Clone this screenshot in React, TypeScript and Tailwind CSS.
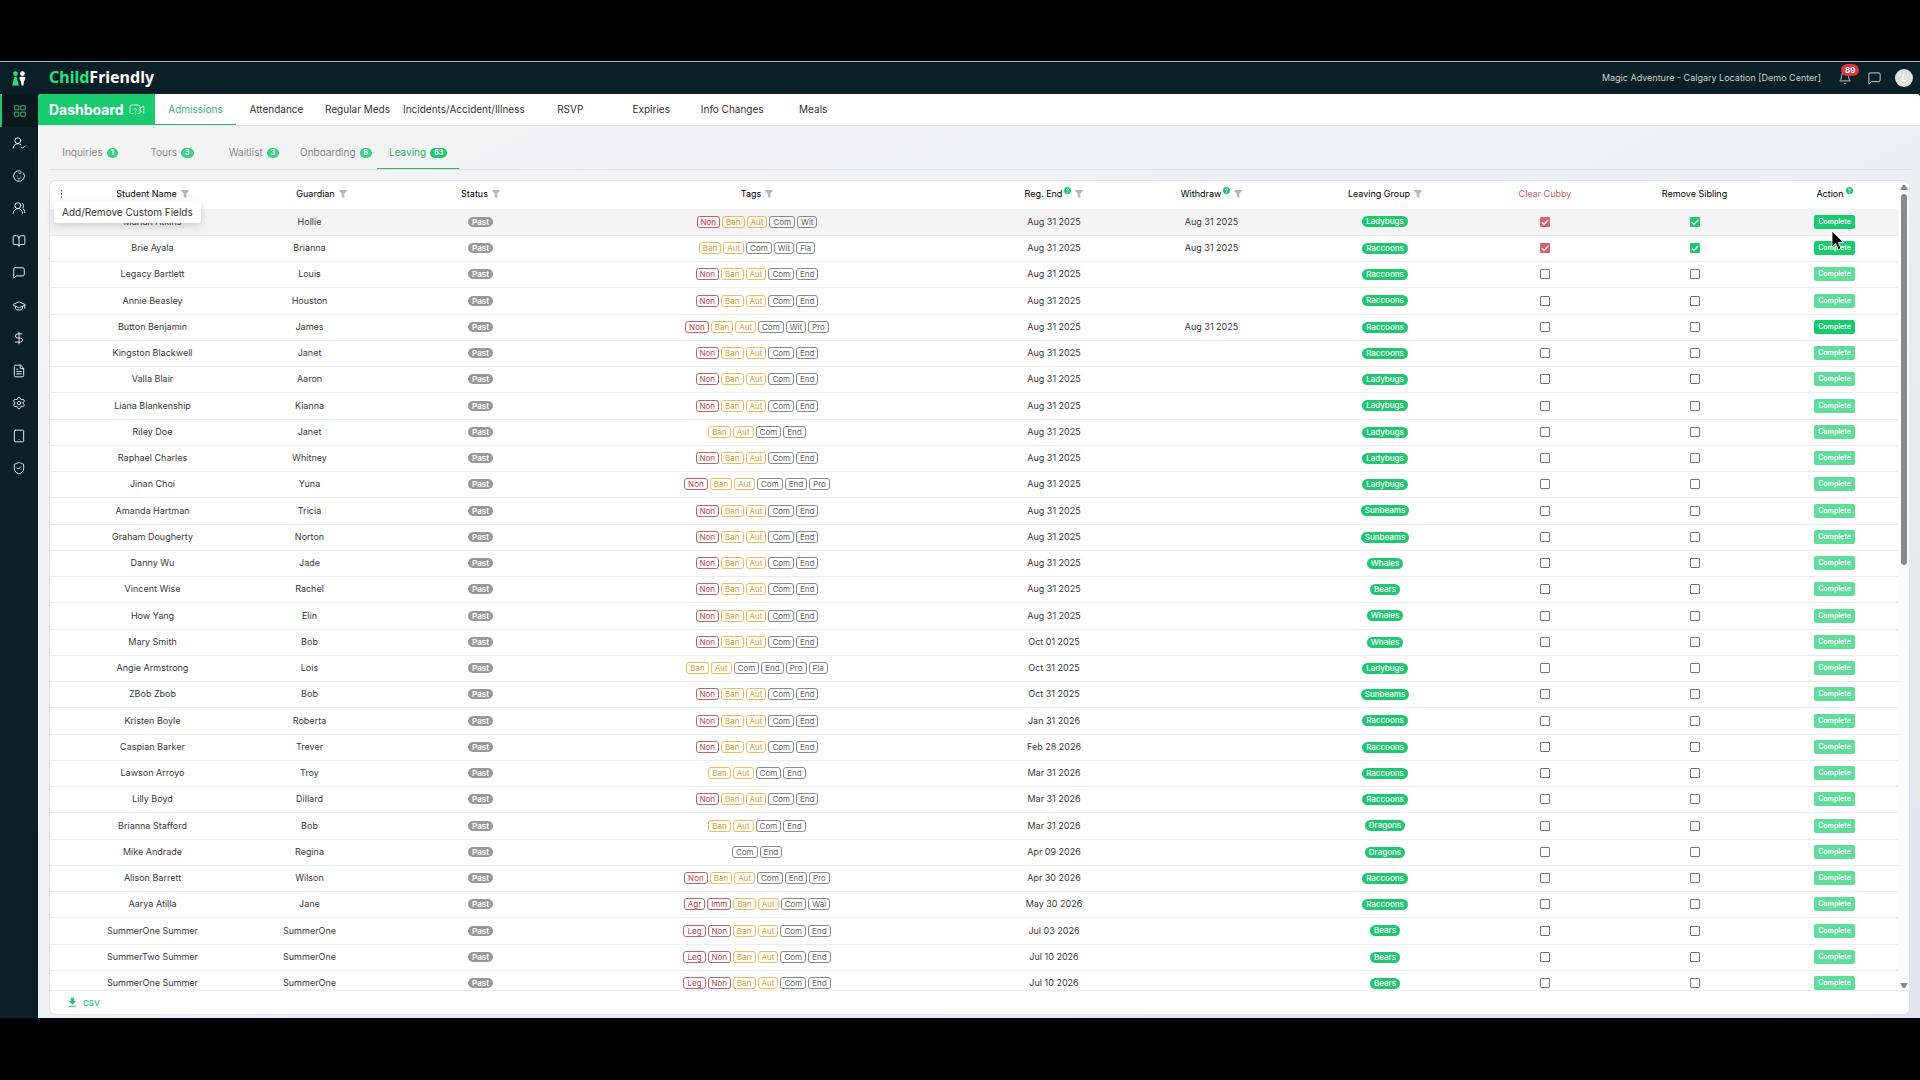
import { useState } from 'react';
import clsx from 'clsx';
import { FiBell, FiGrid, FiMessageSquare } from 'react-icons/fi';
import { MdDownload } from 'react-icons/md';
import {
  Baby,
  BookOpen,
  DollarSign,
  FileText,
  GraduationCap,
  Settings,
  ShieldCheck,
  Tablet,
  UserRoundCheck,
  UsersRound,
} from 'lucide-react';

type Row = {
  name: string;
  guardian: string;
  tags: string;
  regEnd: string;
  withdraw?: string;
  group: string;
  checked?: boolean;
};

const NBACE = 'Non Ban Aut Com End';
const AUG = 'Aug 31 2025';

const initialRows: Row[] = [
  { name: 'Marian Atkins', guardian: 'Hollie', tags: 'Non Ban Aut Com Wit', regEnd: AUG, withdraw: AUG, group: 'Ladybugs', checked: true },
  { name: 'Brie Ayala', guardian: 'Brianna', tags: 'Ban Aut Com Wit Fla', regEnd: AUG, withdraw: AUG, group: 'Raccoons', checked: true },
  { name: 'Legacy Bartlett', guardian: 'Louis', tags: NBACE, regEnd: AUG, group: 'Raccoons' },
  { name: 'Annie Beasley', guardian: 'Houston', tags: NBACE, regEnd: AUG, group: 'Raccoons' },
  { name: 'Button Benjamin', guardian: 'James', tags: 'Non Ban Aut Com Wit Pro', regEnd: AUG, withdraw: AUG, group: 'Raccoons' },
  { name: 'Kingston Blackwell', guardian: 'Janet', tags: NBACE, regEnd: AUG, group: 'Raccoons' },
  { name: 'Valla Blair', guardian: 'Aaron', tags: NBACE, regEnd: AUG, group: 'Ladybugs' },
  { name: 'Liana Blankenship', guardian: 'Kianna', tags: NBACE, regEnd: AUG, group: 'Ladybugs' },
  { name: 'Riley Doe', guardian: 'Janet', tags: 'Ban Aut Com End', regEnd: AUG, group: 'Ladybugs' },
  { name: 'Raphael Charles', guardian: 'Whitney', tags: NBACE, regEnd: AUG, group: 'Ladybugs' },
  { name: 'Jinan Choi', guardian: 'Yuna', tags: 'Non Ban Aut Com End Pro', regEnd: AUG, group: 'Ladybugs' },
  { name: 'Amanda Hartman', guardian: 'Tricia', tags: NBACE, regEnd: AUG, group: 'Sunbeams' },
  { name: 'Graham Dougherty', guardian: 'Norton', tags: NBACE, regEnd: AUG, group: 'Sunbeams' },
  { name: 'Danny Wu', guardian: 'Jade', tags: NBACE, regEnd: AUG, group: 'Whales' },
  { name: 'Vincent Wise', guardian: 'Rachel', tags: NBACE, regEnd: AUG, group: 'Bears' },
  { name: 'How Yang', guardian: 'Elin', tags: NBACE, regEnd: AUG, group: 'Whales' },
  { name: 'Mary Smith', guardian: 'Bob', tags: NBACE, regEnd: 'Oct 01 2025', group: 'Whales' },
  { name: 'Angie Armstrong', guardian: 'Lois', tags: 'Ban Aut Com End Pro Fla', regEnd: 'Oct 31 2025', group: 'Ladybugs' },
  { name: 'ZBob Zbob', guardian: 'Bob', tags: NBACE, regEnd: 'Oct 31 2025', group: 'Sunbeams' },
  { name: 'Kristen Boyle', guardian: 'Roberta', tags: NBACE, regEnd: 'Jan 31 2026', group: 'Raccoons' },
  { name: 'Caspian Barker', guardian: 'Trever', tags: NBACE, regEnd: 'Feb 28 2026', group: 'Raccoons' },
  { name: 'Lawson Arroyo', guardian: 'Troy', tags: 'Ban Aut Com End', regEnd: 'Mar 31 2026', group: 'Raccoons' },
  { name: 'Lilly Boyd', guardian: 'Dillard', tags: NBACE, regEnd: 'Mar 31 2026', group: 'Raccoons' },
  { name: 'Brianna Stafford', guardian: 'Bob', tags: 'Ban Aut Com End', regEnd: 'Mar 31 2026', group: 'Dragons' },
  { name: 'Mike Andrade', guardian: 'Regina', tags: 'Com End', regEnd: 'Apr 09 2026', group: 'Dragons' },
  { name: 'Alison Barrett', guardian: 'Wilson', tags: 'Non Ban Aut Com End Pro', regEnd: 'Apr 30 2026', group: 'Raccoons' },
  { name: 'Aarya Atilla', guardian: 'Jane', tags: 'Agr Imm Ban Aut Com Wai', regEnd: 'May 30 2026', group: 'Raccoons' },
  { name: 'SummerOne Summer', guardian: 'SummerOne', tags: 'Leg Non Ban Aut Com End', regEnd: 'Jul 03 2026', group: 'Bears' },
  { name: 'SummerTwo Summer', guardian: 'SummerOne', tags: 'Leg Non Ban Aut Com End', regEnd: 'Jul 10 2026', group: 'Bears' },
  { name: 'SummerOne Summer', guardian: 'SummerOne', tags: 'Leg Non Ban Aut Com End', regEnd: 'Jul 10 2026', group: 'Bears' },
];

const tagColors: Record<string, string> = {
  Non: 'border-[#c4626a] text-[#b9434d]',
  Agr: 'border-[#c4626a] text-[#b9434d]',
  Imm: 'border-[#c4626a] text-[#b9434d]',
  Leg: 'border-[#c4626a] text-[#b9434d]',
  Ban: 'border-[#e6c05c] text-[#d9a033]',
  Aut: 'border-[#e6c05c] text-[#d9a033]',
};

const sideItems = [
  { label: 'Dashboard', Icon: FiGrid },
  { label: 'Attendance', Icon: UserRoundCheck },
  { label: 'Children', Icon: Baby },
  { label: 'Families', Icon: UsersRound },
  { label: 'Programs', Icon: BookOpen },
  { label: 'Messages', Icon: FiMessageSquare },
  { label: 'Learning', Icon: GraduationCap },
  { label: 'Billing', Icon: DollarSign },
  { label: 'Reports', Icon: FileText },
  { label: 'Settings', Icon: Settings },
  { label: 'Devices', Icon: Tablet },
  { label: 'Security', Icon: ShieldCheck },
];

const mainTabs = ['Admissions', 'Attendance', 'Regular Meds', 'Incidents/Accident/Illness', 'RSVP', 'Expiries', 'Info Changes', 'Meals'];

const subTabs = [
  { label: 'Inquiries', count: 1 },
  { label: 'Tours', count: 3 },
  { label: 'Waitlist', count: 3 },
  { label: 'Onboarding', count: 8 },
  { label: 'Leaving', count: 63 },
];

const columns = [
  { label: 'Student Name', filter: true },
  { label: 'Guardian', filter: true, className: 'pl-6' },
  { label: 'Status', filter: true },
  { label: 'Tags', filter: true },
  { label: 'Reg. End', filter: true, help: true },
  { label: 'Withdraw', filter: true, help: true },
  { label: 'Leaving Group', filter: true },
  { label: 'Clear Cubby', className: 'text-[#cf5f6c]' },
  { label: 'Remove Sibling' },
  { label: 'Action', help: true, className: 'pr-[10px]' },
];

function LogoMark() {
  return (
    <svg viewBox="0 0 14 15" className="h-[15px] w-[14px]" aria-hidden="true">
      <circle cx="3.5" cy="2.6" r="2.4" fill="#22e37f" />
      <path d="M2.4 5.8h2.2L6.8 14.6H.2z" fill="#22e37f" />
      <circle cx="10.4" cy="2.6" r="2.4" fill="#fff" />
      <path d="M7.3 6.2Q10.4 4.8 13.5 6.2L12.6 9.8H12L11.4 14.6H9.6L8.8 9.8H8.2z" fill="#fff" />
    </svg>
  );
}

function VideoHelpIcon() {
  return (
    <svg viewBox="0 0 16 12" className="h-3 w-4" fill="none" stroke="#c5f5da" strokeWidth="1" aria-hidden="true">
      <path d="M4.5 9.5H2.3A1.3 1.3 0 0 1 1 8.2V2.3A1.3 1.3 0 0 1 2.3 1H9.7A1.3 1.3 0 0 1 11 2.3V8.2A1.3 1.3 0 0 1 9.7 9.5H8.5" />
      <path d="M11 4.3 14.8 2V9L11 6.7" />
      <path d="M5 5.8Q5 4.6 6.3 4.6T7.5 6Q7.4 6.900 6.300 7.500V8.500M6.300 9.600V10.800" />
    </svg>
  );
}

function FilterIcon() {
  return (
    <svg viewBox="0 0 8 8" className="h-2 w-2" fill="#b9b9b9" aria-hidden="true">
      <path d="M.2 0H7.8V1.2L5.4 3.6V8L2.700 7V3.600L.2 1.200z" />
    </svg>
  );
}

function HelpDot() {
  return (
    <svg viewBox="0 0 8 8" className="mb-2 h-[7px] w-[7px]" aria-hidden="true">
      <circle cx="4" cy="4" r="4" fill="#1fc870" />
      <path d="M2.8 3.2Q2.9 2 4 2T5.2 3.2Q5.2 3.8 4 4.3V4.9M4 5.600V6.400" fill="none" stroke="#fff" strokeWidth=".9" />
    </svg>
  );
}

function CheckBox({ label, checked, color, onChange }: { label: string; checked: boolean; color: string; onChange: () => void }) {
  return (
    <label className="mx-auto grid h-[10px] w-[10px] place-items-center">
      <input
        type="checkbox"
        aria-label={label}
        checked={checked}
        onChange={onChange}
        className={clsx('[grid-area:1/1] h-[10px] w-[10px] appearance-none rounded-[1px] border', checked ? color : 'border-[#777] bg-white')}
      />
      {checked && (
        <svg viewBox="0 0 10 10" className="pointer-events-none [grid-area:1/1] h-[10px] w-[10px]" aria-hidden="true">
          <path d="M1.8 5.2 4 7.4 8.3 2.9" fill="none" stroke="#fff" strokeWidth="1.3" />
        </svg>
      )}
    </label>
  );
}

function Tag({ name }: { name: string }) {
  return (
    <span className={clsx('h-3 rounded-[3px] border px-[3px] text-[8px] leading-[10px]', tagColors[name] ?? 'border-[#8a8a8a] text-[#666]')}>
      {name}
    </span>
  );
}

export default function App() {
  const [activeTab, setActiveTab] = useState('Admissions');
  const [activeSub, setActiveSub] = useState('Leaving');
  const [cubby, setCubby] = useState(initialRows.map((r) => !!r.checked));
  const [sibling, setSibling] = useState(initialRows.map((r) => !!r.checked));

  const toggle = (list: boolean[], i: number) => list.map((v, n) => (n === i ? !v : v));

  return (
    <div className="flex h-screen flex-col overflow-hidden bg-black pt-[61px] pb-[62px] font-['Inter',sans-serif]">
      <div className="flex min-h-0 flex-1 flex-col border-t border-[#aeb4b6] bg-[#0b1f26]">
        <header className="flex h-8 shrink-0 items-center">
          <div className="flex w-[38px] justify-center">
            <LogoMark />
          </div>
          <div className="ml-[11px] flex-1 pb-[2px] font-['Noto_Sans',sans-serif] text-[16px] leading-5 font-bold text-white">
            <span className="text-[#22e37f]">Child</span>Friendly
          </div>
          <span className="text-[9px] text-[#c9d0d2]">Magic Adventure - Calgary Location [Demo Center]</span>
          <button aria-label="Notifications" className="relative ml-[17px] h-[14px] w-[14px] text-[#d5dadb]">
            <FiBell size={14} strokeWidth={1.5} />
            <span className="absolute -top-[7px] left-[3px] rounded-full bg-[#dc3545] px-1 text-[8px] leading-3 font-bold text-white">89</span>
          </button>
          <button aria-label="Chat" className="ml-[15px] text-[#d5dadb]">
            <FiMessageSquare size={15} strokeWidth={1.5} />
          </button>
          <button aria-label="Account" className="mr-[7px] ml-[13px] h-[18px] w-[18px] rounded-full bg-[#e2e2e4] text-[8px] font-bold text-white">
            L
          </button>
        </header>

        <div className="flex min-h-0 flex-1">
          <nav aria-label="Main" className="w-[38px] shrink-0">
            {sideItems.map(({ label, Icon }, i) => (
              <a
                key={label}
                href="#"
                aria-label={label}
                className={clsx(
                  'flex h-8 items-center justify-center odd:h-[33px]',
                  i === 0 ? 'border-l-2 border-[#1fc870] bg-[#0a171d] text-[#3fae74]' : 'text-[#e6eaeb]'
                )}
              >
                <Icon size={14} strokeWidth={1.7} />
              </a>
            ))}
          </nav>

          <main className="flex min-w-0 flex-1 flex-col overflow-hidden rounded-t-[4px] bg-linear-to-br from-[#f4f4f4] via-[#eeeff3] to-[#e1e4ed]">
            <div className="flex h-8 shrink-0 border-b border-[#e4e8e6] bg-white">
              <h1 className="flex w-[117px] items-center gap-[5px] bg-[#18cb6e] pl-[11px] text-[14px] font-bold text-white">
                Dashboard
                <VideoHelpIcon />
              </h1>
              {mainTabs.map((tab) => (
                <button
                  key={tab}
                  onClick={() => setActiveTab(tab)}
                  className={clsx(
                    'min-w-[81px] border-b px-[5px] text-[10px] whitespace-nowrap',
                    tab === activeTab ? 'border-[#2fb673] text-[#2fb673]' : 'border-transparent text-[#333]'
                  )}
                >
                  {tab}
                </button>
              ))}
            </div>

            <div className="mt-[11px] mr-[9px] ml-[11px] flex h-[33px] shrink-0 border-b border-[#dfe0e3]">
              {subTabs.map(({ label, count }) => (
                <button
                  key={label}
                  onClick={() => setActiveSub(label)}
                  className={clsx(
                    'flex min-w-[82px] items-center justify-center gap-1 border-b px-[5px] text-[10px]',
                    label === activeSub ? 'border-[#2fb673] text-[#2fb673]' : 'border-transparent text-[#8a8a8a]'
                  )}
                >
                  {label}
                  <span className={clsx('rounded-full px-1 text-[7px] leading-[10px] font-bold text-white', label === activeSub ? 'bg-[#1fc870]' : 'bg-[#3fd08a]')}>
                    {count}
                  </span>
                </button>
              ))}
            </div>

            <section className="relative mt-[10px] mr-[10px] mb-[3px] ml-[11px] flex min-h-0 flex-1 flex-col rounded-[7px] border border-[#e3e4e7] bg-white">
              <div className="flex min-h-0 flex-1">
                <div className="min-w-0 flex-1 overflow-hidden">
                  <table className="w-full table-fixed text-center text-[9px] leading-3 whitespace-nowrap text-[#3a3a3a]">
                    <colgroup>
                      <col className="w-[56px]" />
                      <col className="w-[93px]" />
                      <col className="w-[221px]" />
                      <col className="w-[121px]" />
                      <col />
                      <col className="w-[162px]" />
                      <col className="w-[153px]" />
                      <col className="w-[194px]" />
                      <col className="w-[126px]" />
                      <col className="w-[173px]" />
                      <col className="w-[117px]" />
                    </colgroup>
                    <thead>
                      <tr className="h-[28px] text-black">
                        <th className="pb-[2px] pl-[10px] text-left">
                          <button aria-label="Add/Remove Custom Fields" className="block">
                            <svg viewBox="0 0 3 8" className="h-2 w-[3px]" fill="#444" aria-hidden="true">
                              <path d="M1 0h1v1.500H1zM1 3h1v1.500H1zM1 6h1v1.500H1z" />
                            </svg>
                          </button>
                        </th>
                        {columns.map((col) => (
                          <th key={col.label} className={clsx('pb-[2px] font-normal', col.className)}>
                            <div className="flex items-center justify-center gap-1">
                              <span className="flex items-center gap-[2px]">
                                {col.label}
                                {col.help && <HelpDot />}
                              </span>
                              {col.filter && <FilterIcon />}
                            </div>
                          </th>
                        ))}
                      </tr>
                    </thead>
                    <tbody>
                      {initialRows.map((row, i) => (
                        <tr key={i} className="h-[26px] border-b border-[#ececec] first:bg-[#f4f4f4] nth-[4n]:h-[27px]">
                          <td />
                          <td>{row.name}</td>
                          <td>{row.guardian}</td>
                          <td>
                            <span className="mx-auto block w-fit rounded-full bg-[#999] px-1 text-[8px] leading-[10px] font-semibold text-white">Past</span>
                          </td>
                          <td>
                            <div className="flex justify-center gap-[2px]">
                              {row.tags.split(' ').map((t) => (
                                <Tag key={t} name={t} />
                              ))}
                            </div>
                          </td>
                          <td>{row.regEnd}</td>
                          <td>{row.withdraw}</td>
                          <td>
                            <span className="mx-auto block w-fit rounded-full bg-[#1fc870] px-1 text-[8px] leading-[11px] font-medium text-white">{row.group}</span>
                          </td>
                          <td>
                            <CheckBox
                              label={`Clear cubby for ${row.name}`}
                              checked={cubby[i]}
                              color="border-[#d9606f] bg-[#d9606f]"
                              onChange={() => setCubby(toggle(cubby, i))}
                            />
                          </td>
                          <td>
                            <CheckBox
                              label={`Remove sibling for ${row.name}`}
                              checked={sibling[i]}
                              color="border-[#1fc870] bg-[#1fc870]"
                              onChange={() => setSibling(toggle(sibling, i))}
                            />
                          </td>
                          <td className="pr-[10px]">
                            <button
                              disabled={!row.withdraw}
                              className="mx-auto block h-[14px] rounded-[2px] bg-[#18cb6e] px-1 text-[7px] leading-[14px] font-semibold text-white disabled:bg-[#60dc9b]"
                            >
                              Complete
                            </button>
                          </td>
                        </tr>
                      ))}
                    </tbody>
                  </table>
                </div>

                {/* scrollbar */}
                <div className="flex w-[11px] shrink-0 flex-col items-center rounded-tr-[7px] bg-[#fcfcfc] pt-1 pb-[2px]" aria-hidden="true">
                  <svg viewBox="0 0 8 5" className="h-[5px] w-[8px]" fill="#8a8a8a">
                    <path d="M0 5 3 0H5L8 5z" />
                  </svg>
                  <div className="mt-1 flex-1">
                    <div className="h-[47%] w-[6px] rounded-full bg-[#8a8a8a]" />
                  </div>
                  <svg viewBox="0 0 8 5" className="h-[5px] w-[8px]" fill="#8a8a8a">
                    <path d="M0 0 3 5H5L8 0z" />
                  </svg>
                </div>
              </div>

              <div className="flex h-6 shrink-0 items-center border-t border-[#ececec] pl-[16px]">
                <button className="flex items-center gap-1 text-[8px] font-medium text-[#1fc870]">
                  <MdDownload size={13} />
                  CSV
                </button>
              </div>

              <div role="tooltip" className="absolute top-[21px] left-1 rounded-[2px] bg-white px-2 text-[10px] leading-[21px] text-[#333] shadow-[0_3px_8px_rgba(0,0,0,0.16)]">
                Add/Remove Custom Fields
              </div>

              {/* mouse pointer */}
              <svg viewBox="0 0 14 21" className="pointer-events-none absolute top-[49px] right-[64px] h-[21px] w-[14px]" aria-hidden="true">
                <path d="M1 1V17L4.7 13.6 7.3 19.600 10 18.400 7.400 12.600H12.600z" fill="#000" stroke="#fff" strokeWidth=".8" />
              </svg>
            </section>
          </main>
        </div>
      </div>
    </div>
  );
}
